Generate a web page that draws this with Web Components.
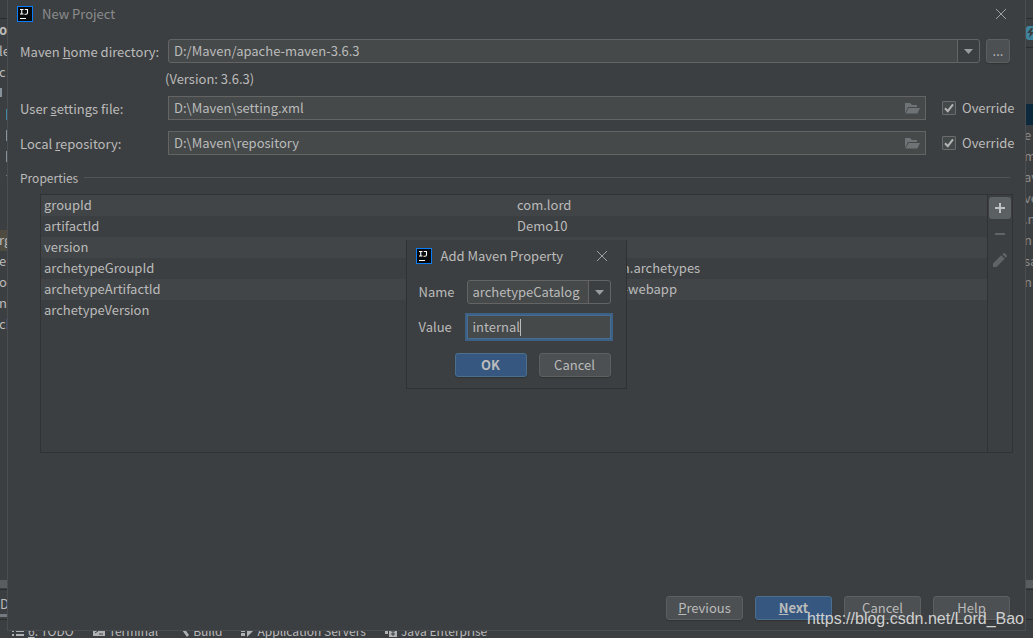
<!DOCTYPE html>
<html lang="en">
<head>
<meta charset="utf-8">
<title>New Project</title>
<style>
html, body { margin: 0; height: 100%; background: #3c3f41; }
body { font: 13px/21px "Noto Sans CJK SC", "Noto Sans", sans-serif; color: #bbbbbb; overflow: hidden; }
</style>
</head>
<body>
<ide-shell>
  <edge-strip slot="left" side="left"></edge-strip>
  <project-dialog></project-dialog>
  <edge-strip slot="right" side="right"></edge-strip>
  <status-bar slot="bottom"></status-bar>
</ide-shell>
<script>
const define = (name, html, setup) => {
  const t = document.createElement('template');
  t.innerHTML = html;
  customElements.define(name, class extends HTMLElement {
    constructor() {
      super();
      this.attachShadow({ mode: 'open' }).append(t.content.cloneNode(true));
    }
    connectedCallback() { if (setup) setup(this, this.shadowRoot); }
  });
};
const base = ':host,*{box-sizing:border-box} button,input,select{font:inherit;color:inherit;margin:0;outline:none} ';

define('ide-logo', `<style>:host{display:block;width:16px;height:16px}svg{display:block}</style>
<svg width="16" height="16" viewBox="0 0 16 16"><rect width="16" height="16" fill="#087cfa"/><rect x="1" y="1" width="14" height="14" fill="#08090b"/><path d="M3 3.500h3.500M4.750 3.500v4.500M3 8h3.500M7.800 3.500h2.700v3.200q0 1.500-1.500 1.500H7.500" fill="none" stroke="#fff" stroke-width="1.100"/><path d="M3 12h6v1H3z" fill="#fff"/></svg>`);

define('close-button', `<style>${base}:host{display:block}button{display:block;border:0;padding:0;background:none}svg{display:block}</style>
<button type="button" aria-label="Close"><svg width="12" height="12" viewBox="0 0 12 12"><path d="M1 1l10 10M11 1L1 11" stroke="#a0a2a4" stroke-width="1"/></svg></button>`);

define('push-button', `<style>${base}:host{display:block;width:77px}
button{display:block;width:100%;height:24px;padding:0;line-height:22px;background:#4c5052;border:1px solid #5e6060;border-radius:3px;color:#bbb;box-shadow:0 1px 1px #0003}
:host([primary]) button{background:#365880;border-color:#4c708c;font-weight:bold}</style>
<button type="button"><slot></slot></button>`);

define('check-option', `<style>${base}:host{display:block;width:71px}label{display:flex;align-items:center;gap:6px;line-height:24px}
input{appearance:none;width:14px;height:14px;background:#43494a;border:1px solid #6b6b6b;border-radius:1px}
.box{display:grid}.box>*{grid-area:1/1}svg{pointer-events:none}</style>
<label><span class="box"><input type="checkbox" checked><svg width="14" height="14" viewBox="0 0 14 14"><path d="M3 7.200l2.800 3L11 3.400" fill="none" stroke="#b4b4b4" stroke-width="2"/></svg></span><slot></slot></label>`);

define('combo-field', `<style>${base}:host{display:grid;flex:1;min-width:0}
select,svg{grid-area:1/1}
select{appearance:none;width:100%;height:24px;padding:0 28px 0 5px;line-height:20px;background:linear-gradient(#646464,#646464) right 21px top/1px 100% no-repeat,linear-gradient(#3c3f41,#3c3f41) right/21px 100% no-repeat,#45494a;border:1px solid #646464;border-radius:3px}
svg{justify-self:end;align-self:center;margin-right:7px;pointer-events:none}</style>
<select></select><svg width="9" height="5" viewBox="0 0 9 5"><path d="M0 0h9L4.500 5z" fill="#9a9da0"/></svg>`,
(host, root) => {
  const s = root.querySelector('select');
  s.add(new Option(host.getAttribute('value')));
  s.setAttribute('aria-label', host.getAttribute('label'));
});

define('path-field', `<style>${base}:host{display:flex;align-items:center;flex:1;min-width:0;height:24px;padding:0 5px;background:#45494a;border:1px solid #646464}
input{flex:1;min-width:0;height:20px;padding:0;line-height:20px;background:none;border:0}
svg{flex:none}
.caret{display:none;width:1px;height:17px;background:#bbb}
:host([focused]) svg{display:none}
:host([focused]) .caret{display:block}
:host([focused]) input{flex:none;field-sizing:content}
:host([focused]){border-color:#466d94;box-shadow:0 0 0 2px #3d6185}</style>
<input type="text"><span class="caret"></span><svg width="16" height="14" viewBox="0 0 16 14"><path d="M1 12V2h5l2 2h5v2H4z" fill="#6e7375"/><path d="M4.600 7H16l-2.600 5.500H1.500z" fill="#6e7375"/></svg>`,
(host, root) => {
  const i = root.querySelector('input');
  i.value = host.getAttribute('value');
  i.setAttribute('aria-label', host.getAttribute('label'));
});

define('property-table', `<style>${base}:host{display:flex;border:1px solid #323232;height:259px}
.data{flex:1;min-width:0}
table{width:100%;border-collapse:collapse;table-layout:fixed}
td{height:21px;padding:0 3px;line-height:19px;vertical-align:top;white-space:pre}
tr:nth-child(odd){background:#414547}
.tools{display:flex;flex-direction:column;align-items:center;width:25px;padding-top:2px;gap:4px;border-left:1px solid #323232}
.tools button{display:grid;place-items:center;width:22px;height:22px;padding:0;border:0;border-radius:3px;background:none}
.tools button.on{background:#5b6062}</style>
<div class="data"><table><tbody></tbody></table></div>
<div class="tools">
<button type="button" class="on" aria-label="Add"><svg width="10" height="10" viewBox="0 0 10 10"><path d="M4 0h2v4h4v2H6v4H4V6H0V4h4z" fill="#bfc1c2"/></svg></button>
<button type="button" aria-label="Remove"><svg width="10" height="2"><path d="M0 0h10v2H0z" fill="#616466"/></svg></button>
<button type="button" aria-label="Edit"><svg width="14" height="14" viewBox="0 0 14 14"><path d="M0 14v-3.600L8.200 2.300l3.500 3.500L3.500 14zM9.300 1.200L10 .5q1-1 2 0l1.500 1.500q1 1 0 2l-.7.700z" fill="#616466"/></svg></button>
</div>`, (host, root) => {
  const body = root.querySelector('tbody');
  [['groupId', 'com.lord'], ['artifactId', 'Demo10'], ['version', ''],
   ['archetypeGroupId', 'org.apache.maven.archetypes'], ['archetypeArtifactId', 'maven-archetype-webapp'],
   ['archetypeVersion', '']].forEach(r => {
    const tr = body.insertRow();
    r.forEach(c => tr.insertCell().textContent = c);
  });
});

define('property-modal', `<style>${base}:host{display:block;width:221px;background:#3c3f41;border:1px solid #2f3133;border-top-color:#3c3f41;padding:6px 15px 11px 12px}
header{display:flex;align-items:center;gap:9px;height:18px;padding-right:3px;margin-left:-3px}
header span{flex:1;padding-bottom:2px}
.row{display:flex;align-items:center;height:24px;margin-bottom:11px}
header+.row{margin-top:15px}
.row>span{width:48px;padding-bottom:2px}
footer{display:flex;justify-content:flex-end;gap:12px;margin-top:14px}
push-button{width:72px}</style>
<header><ide-logo></ide-logo><span>Add Maven Property</span><close-button></close-button></header>
<div class="row"><span>Name</span><combo-field label="Name" value="archetypeCatalog"></combo-field></div>
<div class="row"><span>Value</span><path-field focused label="Value" value="internal"></path-field></div>
<footer><push-button primary>OK</push-button><push-button>Cancel</push-button></footer>`);

define('project-dialog', `<style>${base}:host{display:flex;flex-direction:column;position:relative;min-height:0;border:1px solid #4b4e50;border-top:0;padding:0 12px 10px}
.title{display:flex;align-items:center;gap:9px;height:28px;margin-left:-3px;padding-right:6px;color:#8a8c8e}
.title span{flex:1;padding-bottom:2px}
.row{display:grid;grid-template-columns:148px 1fr;align-items:center;margin-bottom:11px}
.first{margin:11px 3px 0 0}
.fields{display:flex;gap:6px;align-items:center}
.fields push-button{width:24px}
.fields check-option{margin-left:10px}
.version{line-height:19px;margin:6px 0 8px 145px}
fieldset{border:0;padding:0;margin:1px 0 0}
legend{display:flex;align-items:center;gap:6px;width:100%;padding:0 3px 0 0;line-height:21px;font-size:12px}
legend::after{content:"";flex:1;border-top:1px solid #515456}
property-table{margin:6px 0 0 20px}
footer{display:flex;justify-content:flex-end;gap:12px;margin-top:auto;padding-right:3px}
property-modal{position:absolute;left:50%;top:240px;margin-left:-111px}
</style>
<div class="title"><ide-logo></ide-logo><span>New Project</span><close-button></close-button></div>
<div class="row first"><span>Maven <u>h</u>ome directory:</span><div class="fields"><combo-field label="Maven home directory" value="D:/Maven/apache-maven-3.6.3"></combo-field><push-button>...</push-button></div></div>
<div class="version">(Version: 3.6.3)</div>
<div class="row"><span>User <u>s</u>ettings file:</span><div class="fields"><path-field label="User settings file" value="D:\\Maven\\setting.xml"></path-field><check-option>Override</check-option></div></div>
<div class="row"><span>Local <u>r</u>epository:</span><div class="fields"><path-field label="Local repository" value="D:\\Maven\\repository"></path-field><check-option>Override</check-option></div></div>
<fieldset><legend>Properties</legend><property-table></property-table></fieldset>
<footer><push-button><u>P</u>revious</push-button><push-button primary><u>N</u>ext</push-button><push-button>Cancel</push-button><push-button>Help</push-button></footer>
<property-modal></property-modal>`);

define('edge-strip', `<style>${base}:host{display:flex;flex-direction:column;overflow:hidden;min-width:0;min-height:0}
.top{height:20px;flex:none;display:flex;flex-direction:column;justify-content:flex-end;padding-bottom:1px}
.line{height:1px;flex:none;background:#2b2b2b}
.item{height:21px;flex:none;white-space:pre;line-height:19px;text-indent:-1px}
.item svg{display:block}
:host([side=right]) .item{color:#8c8c8c;text-indent:-2px}
.item.current{background:#4f4b41}
.item.selected{background:#0d293e}
.rule{padding-top:6px}
.bottom{margin-top:auto;flex:none}
.gray{height:8px;background:#5a5d5f;margin-bottom:1px}
.tab{height:24px;line-height:28px}
.under{height:3px}
:host([side=left]) .under{background:#747a80;margin-bottom:2px}
:host([side=right]) .under{margin-bottom:2px}
.foot{height:11px}</style>
<div class="top"><div class="line"></div></div><div class="rows"></div>
<div class="bottom"><div class="gray"></div><div class="line"></div><div class="tab"></div><div class="under"></div><div class="line"></div><div class="foot"></div></div>`,
(host, root) => {
  const left = host.getAttribute('side') === 'left';
  const bar = (c, x, w, y = 5, h = 11) => `<svg width="8" height="21"><path d="M${x} ${y}h${w}v${h}h-${w}z" fill="${c}"/></svg>`;
  const rows = left
    ? [['<b>o</b>'], ['le'], ['c'], [bar('#87939a', 0, 2, 5, 9)], [bar('#3e86a0', 6, 2)], [bar('#87939a', 6, 2)], [bar('#87939a', 6, 2)],
       ['<svg width="8" height="21"><path d="M6 8h2v3z" fill="#9a9da0"/></svg>'], [''], [''], ['rg', 'current'], ['er'], ['or'], ['na'], ['ch']]
    : [['<svg width="8" height="21"><rect y="6" width="14" height="14" rx="3" fill="#3e86a0"/><path d="M5 8L1 13h3l-1 5 5-6H5l2-4z" fill="#3c3f41"/></svg>'],
       ['<div class="line"></div>', 'rule'], [''], [''], ['', 'selected'], ['e'], ['m'], ['av'], ['ve'], ['.n'], ['n.'], ['sa'], ['n.']];
  root.querySelector('.rows').innerHTML = rows.map(([html, kind = '']) => `<div class="item ${kind}">${html}</div>`).join('');
  if (left) root.querySelector('.tab').textContent = 'D';
});

define('status-bar', `<style>${base}:host{display:block;height:7px;overflow:hidden}
nav{display:flex;margin-top:-9px;padding-left:12px;font-size:12px;line-height:18px}
a{display:flex;align-items:center;gap:4px;color:inherit;text-decoration:none;margin-right:19px;white-space:nowrap}</style>
<nav>
<a href="#"><svg width="12" height="12" viewBox="0 0 12 12"><path d="M0 1h2v2H0zM4 1h8v2H4zM0 5h2v2H0zM4 5h8v2H4zM0 9h2v2H0zM4 9h8v2H4z" fill="#afb1b3"/></svg><span><u>6</u>: TODO</span></a>
<a href="#"><svg width="12" height="12" viewBox="0 0 12 12"><path d="M0 1h12v10H0z" fill="#afb1b3"/><path d="M2 4l3 2-3 2M6 9h4" stroke="#3c3f41" fill="none"/></svg><span>Terminal</span></a>
<a href="#"><svg width="12" height="12" viewBox="0 0 12 12"><path d="M0 5l4-4 3 2 5 7-2 2-5-7-2 1z" fill="#afb1b3"/></svg><span>Build</span></a>
<a href="#"><svg width="12" height="12" viewBox="0 0 12 12"><path d="M0 0h4v3H0zM0 4h4v3H0zM0 8h4v3H0zM6 1l6 5-6 6z" fill="#afb1b3"/></svg><span>Application Servers</span></a>
<a href="#"><svg width="12" height="12" viewBox="0 0 12 12"><path d="M0 1h3v8H0zM4 3h8v9H4z" fill="#afb1b3"/><path d="M6 6h4M6 9h4M8 4v7" stroke="#3c3f41"/></svg><span>Java Enterprise</span></a>
</nav>`);

define('ide-shell', `<style>${base}:host{display:grid;position:relative;grid-template:minmax(0,1fr) 7px/7px minmax(0,1fr) 7px;height:100vh;overflow:hidden}
.left{grid-area:1/1}.main{grid-area:1/2}.right{grid-area:1/3}.bottom{grid-area:2/1/3/4}
.left,.right,.main{display:grid;min-width:0;min-height:0}
.mark{position:absolute;right:9px;bottom:9px;font:16px/20px "Liberation Sans",sans-serif;color:#d0d1d1}</style>
<div class="left"><slot name="left"></slot></div><div class="main"><slot></slot></div><div class="right"><slot name="right"></slot></div><div class="bottom"><slot name="bottom"></slot></div>
<div class="mark">https://blog.csdn.net/Lord_Bao</div>`);
</script>
</body>
</html>
